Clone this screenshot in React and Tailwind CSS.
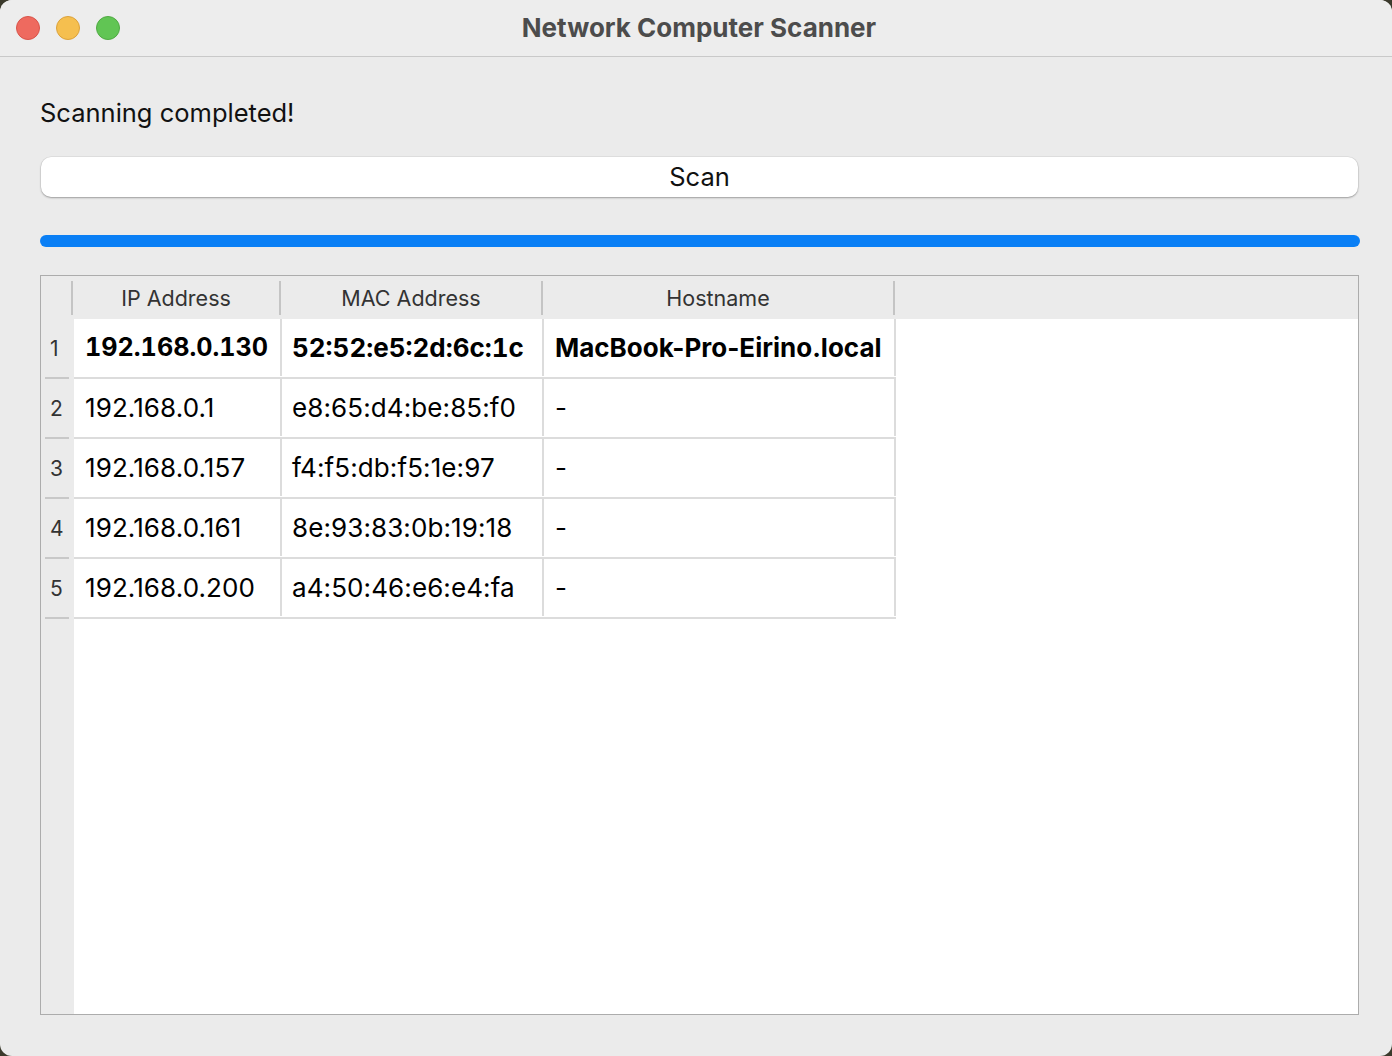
import React from "react";

const rows = [
  { ip: "192.168.0.130", mac: "52:52:e5:2d:6c:1c", host: "MacBook-Pro-Eirino.local", bold: true },
  { ip: "192.168.0.1", mac: "e8:65:d4:be:85:f0", host: "-" },
  { ip: "192.168.0.157", mac: "f4:f5:db:f5:1e:97", host: "-" },
  { ip: "192.168.0.161", mac: "8e:93:83:0b:19:18", host: "-" },
  { ip: "192.168.0.200", mac: "a4:50:46:e6:e4:fa", host: "-" },
];

export default function App() {
  return (
    <div
      className="w-[1392px] h-[1056px] bg-[#3b3a2c]"
      style={{ fontFamily: 'Inter, "Liberation Sans", Arial, sans-serif' }}
    >
      <div className="w-full h-full bg-[#ebebeb] rounded-[12px] overflow-hidden flex flex-col">
        {/* title bar */}
        <div className="h-[57px] shrink-0 bg-[#ededed] border-b border-[#c9c9c9] flex items-center relative">
          <div className="flex gap-[16px] pl-[16px]">
            <span className="w-[24px] h-[24px] rounded-full bg-[#ee6a5f] border border-[#d9544a]" />
            <span className="w-[24px] h-[24px] rounded-full bg-[#f5bf4f] border border-[#dca23b]" />
            <span className="w-[24px] h-[24px] rounded-full bg-[#61c554] border border-[#50aa43]" />
          </div>
          <div className="absolute inset-0 flex items-center justify-center pl-[6px] pb-[2px] text-[26px] font-bold text-[#4c4c4c]">
            Network Computer Scanner
          </div>
        </div>

        {/* content */}
        <div className="flex-1 flex flex-col pl-[40px] pr-[32px] pt-[40px]">
          <div className="text-[25.5px] text-[#111] leading-[32px]">Scanning completed!</div>

          <button className="mt-[28px] ml-[1px] mr-[2px] h-[40px] bg-white rounded-[10px] shadow-[0_1px_2px_rgba(0,0,0,0.3),0_0_0_0.5px_rgba(0,0,0,0.08)] text-[25.5px] text-[#111]">
            Scan
          </button>

          <div className="mt-[38px] h-[12px] rounded-full bg-[#0a7ff5]" />

          {/* table */}
          <div className="mt-[28px] mr-[1px] h-[740px] border border-[#acacac] bg-white flex flex-col">
            <div className="h-[43px] shrink-0 bg-[#ebebeb] flex items-center text-[21.5px] text-[#333]">
              <div className="w-[32px] shrink-0 h-[34px] border-r-2 border-[#c4c4c4]" />
              <div className="w-[208px] text-center border-r-2 border-[#c4c4c4] h-[34px] leading-[34px]">IP Address</div>
              <div className="w-[262px] text-center border-r-2 border-[#c4c4c4] h-[34px] leading-[34px]">MAC Address</div>
              <div className="w-[352px] text-center border-r-2 border-[#c4c4c4] h-[34px] leading-[34px]">Hostname</div>
            </div>
            <div className="flex-1 flex">
              <div className="w-[33px] shrink-0 bg-[#ebebeb] flex flex-col">
                {rows.map((r, i) => (
                  <div key={i} className="h-[60px] relative flex items-center pl-[9px] text-[21px] text-[#333]">
                    {i + 1}
                    <span className="absolute left-[4px] right-[5px] bottom-0 h-[2px] bg-[#c8c8c8]" />
                  </div>
                ))}
              </div>
              <div className="flex flex-col">
                {rows.map((r, i) => (
                  <div
                    key={i}
                    className={`h-[60px] flex border-b-2 border-[#dcdcdc] text-[26px] text-black pb-[1px] ${r.bold ? "font-bold" : "tracking-[0.1px]"}`}
                  >
                    <div className={`w-[208px] pl-[11px] flex items-center border-r-2 border-[#dcdcdc] ${r.bold ? "tabular-nums text-[25.2px]" : ""}`}>{r.ip}</div>
                    <div className={`w-[262px] pl-[10px] flex items-center border-r-2 border-[#dcdcdc] ${r.bold ? "tabular-nums" : ""}`}>{r.mac}</div>
                    <div className="w-[352px] pl-[11px] flex items-center border-r-2 border-[#dcdcdc]">{r.host}</div>
                  </div>
                ))}
              </div>
            </div>
          </div>
        </div>
      </div>
    </div>
  );
}
